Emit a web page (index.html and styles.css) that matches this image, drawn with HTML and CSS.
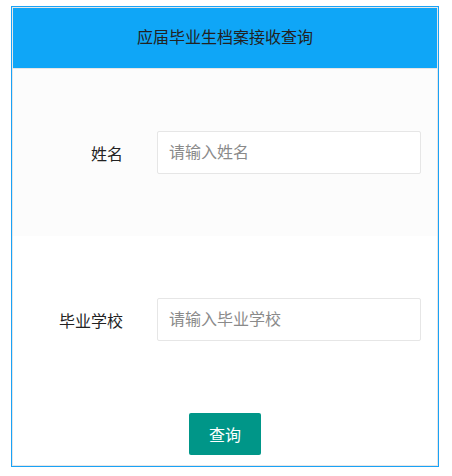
FILE: index.html
```html
<!DOCTYPE html>
<html lang="zh-CN">
<head>
<meta charset="UTF-8">
<meta name="viewport" content="width=device-width, initial-scale=1.0">
<title>应届毕业生档案接收查询</title>
<link rel="stylesheet" href="styles.css">
</head>
<body>

<div class="panel">
    <div class="panel-inner">
        <!-- Header -->
        <div class="panel-header">应届毕业生档案接收查询</div>

        <!-- Form -->
        <form class="query-form" onsubmit="event.preventDefault();">
            <div class="form-item gray">
                <label for="name">姓名</label>
                <input type="text" id="name" placeholder="请输入姓名">
            </div>
            <div class="form-item">
                <label for="school">毕业学校</label>
                <input type="text" id="school" placeholder="请输入毕业学校">
            </div>
            <div class="form-actions">
                <button type="submit" class="btn">查询</button>
            </div>
        </form>
    </div>
</div>

</body>
</html>
```

FILE: styles.css
```css
body {
    font-family: "Liberation Sans", "Noto Sans CJK SC", sans-serif;
    margin: 0;
    padding: 6px 0 0 11px;
    background-color: #fff;
    color: #333;
}

.panel {
    box-sizing: border-box;
    width: 428px;
    border: 1px solid #1aa2f6;
}

.panel-inner {
    border: 1px solid #e6e6e6;
}

.panel-header {
    height: 60px;
    line-height: 60px;
    background: #0fa6f7;
    color: #222;
    text-align: center;
    font-size: 16px;
    border-bottom: 1px solid #e6e6e6;
}

.form-item {
    display: flex;
    align-items: center;
    height: 167px;
}

.form-item.gray {
    background-color: #fcfcfc;
}

.form-item label {
    width: 110px;
    text-align: right;
    font-size: 16px;
    color: #222;
}

.form-item input {
    box-sizing: border-box;
    width: 264px;
    height: 43px;
    margin-left: 34px;
    padding: 0 11px;
    border: 1px solid #e6e6e6;
    border-radius: 2px;
    background: #fff;
    font-family: inherit;
    font-size: 16px;
    color: #333;
    outline: none;
}

.form-item input::placeholder {
    color: #8a8a8a;
}

.form-actions {
    display: flex;
    justify-content: center;
    padding: 10px 0;
}

.btn {
    width: 72px;
    height: 42px;
    border: none;
    border-radius: 2px;
    background-color: #009688;
    color: #fff;
    font-family: inherit;
    font-size: 16px;
    cursor: pointer;
}
```
